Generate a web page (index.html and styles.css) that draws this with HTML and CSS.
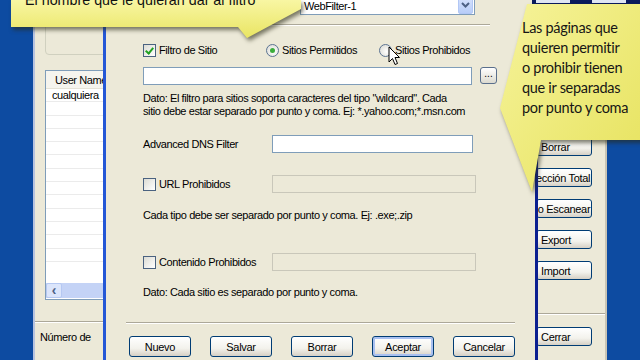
FILE: index.html
```html
<!DOCTYPE html>
<html lang="es">
<head>
  <meta charset="UTF-8">
  <title>WebFilter</title>
  <link rel="stylesheet" href="styles.css">
</head>
<body>
  <div class="screen">
    <!--DESKTOP LEFT-->
    <div class="desk"></div>

    <!--BACK WINDOW, LEFT PART-->
    <div class="win-left">
      <div class="groupbox"></div>
      <div class="userlist">
        <div class="list-head">User Name</div>
        <div class="list-row">cualquiera</div>
        <div class="list-row"></div>
        <div class="list-row"></div>
        <div class="list-row"></div>
        <div class="list-row"></div>
        <div class="list-row"></div>
        <div class="list-row"></div>
        <div class="list-row"></div>
        <div class="list-row"></div>
        <div class="list-row"></div>
        <div class="list-row"></div>
        <div class="list-row"></div>
        <div class="list-row"></div>
        <div class="hscroll"><span class="scroll-btn">&lsaquo;</span></div>
      </div>
      <div class="sep"></div>
      <div class="numero">Número de</div>
    </div>

    <!--FILTER DIALOG-->
    <div class="dialog">
      <div class="combo">
        <span class="combo-text">WebFilter-1</span>
        <span class="combo-btn">
          <svg width="9" height="6" viewBox="0 0 9 6"><path d="M1 1 L4.5 4.5 L8 1" fill="none" stroke="#4d6185" stroke-width="2"/></svg>
        </span>
      </div>
      <div class="hline top-line"></div>

      <div class="opt-row">
        <label class="chk-label"><span class="chk checked"></span>Filtro de Sitio</label>
        <label class="chk-label"><span class="radio on"></span>Sitios Permitidos</label>
        <label class="chk-label"><span class="radio"></span>Sitios Prohibidos</label>
      </div>

      <div class="path-row">
        <div class="field wide"></div>
        <div class="browse">...</div>
      </div>

      <p class="note first-note">Dato: El filtro para sitios soporta caracteres del tipo "wildcard". Cada<br>sitio debe estar separado por punto y coma. Ej: *.yahoo.com;*.msn.com</p>

      <div class="field-row dns-row">
        <span class="field-label">Advanced DNS Filter</span>
        <div class="field dns"></div>
      </div>

      <div class="field-row url-row">
        <label class="chk-label field-label"><span class="chk"></span>URL Prohibidos</label>
        <div class="field off"></div>
      </div>

      <p class="note type-note">Cada tipo debe ser separado por punto y coma. Ej: .exe;.zip</p>

      <div class="field-row content-row">
        <label class="chk-label field-label"><span class="chk"></span>Contenido Prohibidos</label>
        <div class="field off"></div>
      </div>

      <p class="note last-note">Dato: Cada sitio es separado por punto y coma.</p>

      <div class="hline bottom-line"></div>

      <div class="btn-row">
        <button class="xp-btn">Nuevo</button>
        <button class="xp-btn">Salvar</button>
        <button class="xp-btn">Borrar</button>
        <button class="xp-btn default">Aceptar</button>
        <button class="xp-btn">Cancelar</button>
      </div>
    </div>

    <!--BACK WINDOW, RIGHT PART-->
    <div class="win-right">
      <button class="xp-btn side first">Borrar</button>
      <button class="xp-btn side clip-long">Protección Total</button>
      <button class="xp-btn side clip-mid">No Escanear</button>
      <button class="xp-btn side">Export</button>
      <button class="xp-btn side">Import</button>
      <div class="sep side-sep"></div>
      <button class="xp-btn side">Cerrar</button>
    </div>

    <!--DESKTOP RIGHT-->
    <div class="desk"></div>

    <!--OVERLAYS-->
    <div class="top-frame"><span></span><span></span></div>

    <svg class="callout-left" width="320" height="50" viewBox="0 0 320 50">
      <defs>
        <linearGradient id="yl" x1="0" y1="0" x2="0" y2="1">
          <stop offset="0" stop-color="#f9f7a6"/>
          <stop offset="1" stop-color="#e9e563"/>
        </linearGradient>
      </defs>
      <polygon points="11,-2 301,-2 301,9 247,38 238,27 11,27" fill="url(#yl)"/>
    </svg>
    <div class="callout-left-text">El nombre que le quieran dar al filtro</div>

    <svg class="callout-right" width="150" height="200" viewBox="495 0 150 200">
      <defs>
        <linearGradient id="yr" x1="0" y1="0" x2="1" y2="1">
          <stop offset="0" stop-color="#f6f39a"/>
          <stop offset="1" stop-color="#e6e25c"/>
        </linearGradient>
      </defs>
      <polygon points="527,4 645,4 645,140 541,140 532,192 500,108" fill="url(#yr)"/>
    </svg>
    <div class="callout-right-text">Las páginas que<br>quieren permitir<br>o prohibir tienen<br>que ir separadas<br>por punto y coma</div>

    <svg class="cursor" width="13" height="21" viewBox="0 0 13 21">
      <path d="M1 1 L1 16 L4.5 12.5 L7 18.5 L9.5 17.5 L7 11.5 L11.5 11.5 Z" fill="#fff" stroke="#000" stroke-width="1" stroke-linejoin="round"/>
    </svg>
  </div>
</body>
</html>
```

FILE: styles.css
```css
* {
  margin: 0;
  padding: 0;
  box-sizing: border-box;
}

body {
  background-color: #0d4ba1;
  font-family: 'Liberation Sans', Arial, sans-serif;
  font-size: 11px;
  letter-spacing: -0.4px;
  color: #000;
}

.screen {
  position: relative;
  width: 640px;
  height: 360px;
  overflow: hidden;
  display: flex;
}

.desk {
  width: 33px;
  flex-shrink: 0;
  background-color: #0d4ba1;
}

/* back window */
.win-left {
  width: 70px;
  flex-shrink: 0;
  background-color: #ece9d8;
  border-left: 2px solid #b7c3df;
  padding-left: 10px;
  overflow: hidden;
  display: flex;
  flex-direction: column;
}

.groupbox {
  margin-top: -10px;
  height: 65px;
  width: 70px;
  border: 1px solid #d0d0bf;
  border-radius: 4px;
}

.userlist {
  margin-top: 15px;
  width: 80px;
  height: 230px;
  border: 1px solid #7f9db9;
  background-color: #fff;
  position: relative;
}

.list-head {
  height: 18px;
  line-height: 18px;
  padding-left: 9px;
  border-bottom: 1px solid #e4e2d6;
  background-color: #f5f4ee;
}

.list-row {
  height: 13.3px;
  line-height: 13px;
  padding-left: 6px;
  border-bottom: 1px solid #ebebeb;
}

.hscroll {
  position: absolute;
  left: 0;
  right: 0;
  bottom: 1px;
  height: 15px;
  background-color: #c4d3f6;
}

.scroll-btn {
  display: block;
  width: 16px;
  height: 15px;
  line-height: 13px;
  text-align: center;
  font-size: 14px;
  font-weight: bold;
  color: #4d6185;
  background-color: #dbe5fb;
  border: 1px solid #b5c8f2;
  border-radius: 2px;
}

.sep {
  height: 2px;
  border-top: 1px solid #aca899;
  border-bottom: 1px solid #fff;
}

.win-left .sep {
  margin-top: 21px;
  margin-left: -10px;
  width: 80px;
}

.numero {
  margin-top: 8px;
  margin-left: -5px;
  line-height: 13px;
  white-space: nowrap;
}

/* dialog */
.dialog {
  width: 435px;
  flex-shrink: 0;
  background-color: #ece9d8;
  border-left: 3px solid #2457d6;
  border-right: 3px solid #0b1f90;
  padding-left: 37px;
  display: flex;
  flex-direction: column;
  align-items: flex-start;
}

.combo {
  margin-top: -6px;
  margin-left: 157px;
  width: 175px;
  height: 21px;
  border: 1px solid #7f9db9;
  background-color: #fff;
  display: flex;
  align-items: flex-end;
  justify-content: space-between;
}

.combo-text {
  padding-left: 3px;
  line-height: 15px;
}

.combo-btn {
  width: 15px;
  height: 19px;
  margin: 0 1px 0 0;
  display: flex;
  align-items: flex-end;
  justify-content: center;
  padding-bottom: 5px;
  background: linear-gradient(#d9e4fd, #b8cdf8);
  border: 1px solid #b2c7f5;
  border-radius: 2px;
}

.hline {
  height: 2px;
  border-top: 1px solid #aca899;
  border-bottom: 1px solid #fff;
}

.top-line {
  margin-top: 9px;
  margin-left: -18px;
  width: 365px;
}

.bottom-line {
  margin-top: 23px;
  margin-left: -17px;
  width: 389px;
}

.opt-row {
  margin-top: 18px;
  height: 13px;
  display: grid;
  grid-template-columns: 123px 113px auto;
}

.chk-label {
  display: flex;
  align-items: center;
  gap: 3px;
  line-height: 13px;
  white-space: nowrap;
}

.chk {
  width: 13px;
  height: 13px;
  border: 1px solid #4a6280;
  background: linear-gradient(135deg, #dcdcd4, #fff);
  position: relative;
}

.chk.checked::after {
  content: "";
  position: absolute;
  left: 3px;
  top: 1px;
  width: 3px;
  height: 6px;
  border-right: 2px solid #21a121;
  border-bottom: 2px solid #21a121;
  transform: rotate(40deg);
}

.radio {
  width: 13px;
  height: 13px;
  border-radius: 50%;
  border: 1px solid #5b7392;
  background: radial-gradient(circle at 60% 60%, #fff, #d7d7cf);
  position: relative;
}

.radio.on::after {
  content: "";
  position: absolute;
  left: 3px;
  top: 3px;
  width: 5px;
  height: 5px;
  border-radius: 50%;
  background-color: #3bad3b;
}

.path-row {
  margin-top: 10px;
  display: flex;
  gap: 8px;
}

.field {
  height: 18px;
  border: 1px solid #7f9db9;
  background-color: #fff;
}

.field.wide {
  width: 329px;
}

.browse {
  width: 17px;
  height: 17px;
  border: 1px solid #5a6f8c;
  border-radius: 3px;
  background: linear-gradient(#fff, #dcdad0);
  line-height: 12px;
  text-align: center;
  font-size: 10px;
  letter-spacing: 0;
}

.note {
  line-height: 13px;
  white-space: nowrap;
}

.first-note {
  margin-top: 7px;
}

.field-row {
  display: flex;
  align-items: center;
}

.field-label {
  width: 129px;
}

.dns-row {
  margin-top: 17px;
}

.field.dns {
  width: 201px;
}

.url-row {
  margin-top: 22px;
}

.field.off {
  width: 204px;
  height: 18px;
  border-color: #c9c7ba;
  background-color: #ece9d8;
}

.type-note {
  margin-top: 16px;
}

.content-row {
  margin-top: 31px;
}

.last-note {
  margin-top: 15px;
}

.btn-row {
  margin-top: 12px;
  margin-left: -14px;
  display: flex;
  gap: 19px;
}

.xp-btn {
  font-family: inherit;
  font-size: 11px;
  letter-spacing: -0.3px;
  width: 62px;
  height: 21px;
  border: 1px solid #003c74;
  border-radius: 3px;
  background: linear-gradient(#ffffff, #f3f2ec 60%, #d6d0c5);
  color: #000;
  white-space: nowrap;
  overflow: hidden;
}

.xp-btn.default {
  box-shadow: inset 0 0 0 2px #a9c0f0;
}

/* back window, right part */
.win-right {
  width: 69px;
  flex-shrink: 0;
  background-color: #ece9d8;
  border-right: 2px solid #c8c4b4;
  padding-right: 13px;
  display: flex;
  flex-direction: column;
  overflow: hidden;
}

.xp-btn.side {
  width: 56px;
  height: 19px;
  margin-left: -2px;
  text-align: left;
  padding-left: 4px;
  border-radius: 3px;
  margin-top: 12px;
}

.xp-btn.side.first {
  margin-top: 137px;
}

.xp-btn.clip-long {
  text-indent: -24px;
}

.xp-btn.clip-mid {
  text-indent: -11px;
}

.side-sep {
  margin-top: 33px;
  margin-left: -2px;
  width: 70px;
}

/* overlays */
.top-frame {
  position: absolute;
  top: 0;
  left: 532px;
  width: 108px;
  height: 6px;
  background-color: #0a1a5c;
  display: flex;
  gap: 22px;
  padding: 0 4px;
}

.top-frame span {
  width: 34px;
  height: 3px;
  background-color: #dfe6f3;
}

.callout-left {
  position: absolute;
  left: 0;
  top: 0;
  filter: drop-shadow(2px 3px 2px rgba(40, 40, 20, 0.6));
}

.callout-left-text {
  position: absolute;
  left: 25px;
  top: -10px;
  font-size: 14.3px;
  letter-spacing: 0;
  line-height: 20px;
  color: #111;
  white-space: nowrap;
}

.callout-right {
  position: absolute;
  left: 495px;
  top: 0;
  filter: drop-shadow(2px 3px 2px rgba(40, 40, 20, 0.6));
}

.callout-right-text {
  position: absolute;
  left: 522px;
  top: 18px;
  font-family: Lato, 'Open Sans', sans-serif;
  font-size: 14.5px;
  letter-spacing: -0.3px;
  line-height: 20px;
  color: #161616;
  white-space: nowrap;
}

.cursor {
  position: absolute;
  left: 388px;
  top: 46px;
}
```
